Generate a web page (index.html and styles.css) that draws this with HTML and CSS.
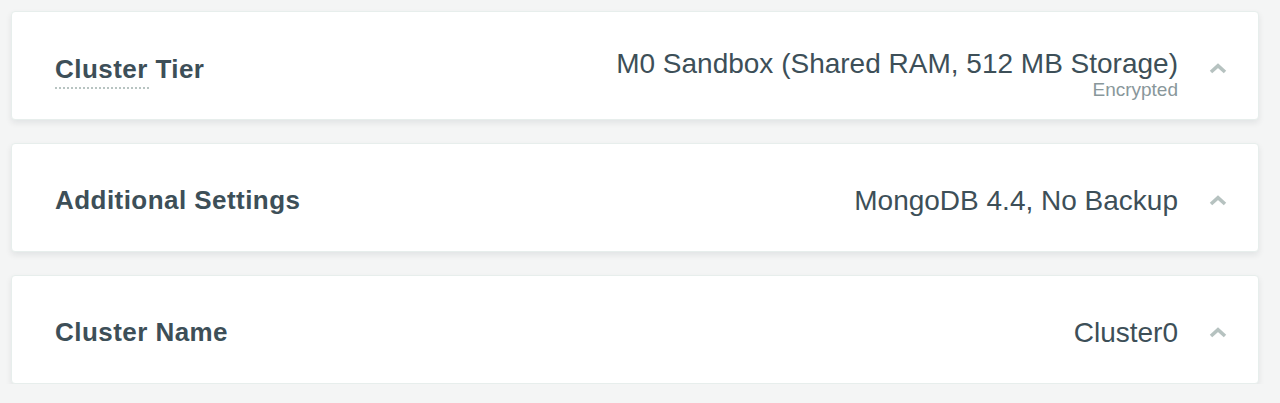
FILE: index.html
```html
<!DOCTYPE html>
<html>
<head>
<meta charset="utf-8">
<link rel="stylesheet" href="styles.css">
</head>
<body>
<div class="stack">
  <section class="card">
    <div class="title title-dotted">Cluster Tier</div>
    <div class="value value-stacked">
      <div class="value-main">M0 Sandbox (Shared RAM, 512 MB Storage)</div>
      <div class="value-sub">Encrypted</div>
    </div>
    <svg class="chev" width="18" height="11" viewBox="0 0 18 11"><path d="M2 9 L9 2.6 L16 9" fill="none" stroke="#b6c2c0" stroke-width="3.6" stroke-linejoin="miter"/></svg>
  </section>
  <section class="card">
    <div class="title">Additional Settings</div>
    <div class="value">
      <div class="value-main">MongoDB 4.4, No Backup</div>
    </div>
    <svg class="chev" width="18" height="11" viewBox="0 0 18 11"><path d="M2 9 L9 2.6 L16 9" fill="none" stroke="#b6c2c0" stroke-width="3.6" stroke-linejoin="miter"/></svg>
  </section>
  <section class="card">
    <div class="title">Cluster Name</div>
    <div class="value">
      <div class="value-main">Cluster0</div>
    </div>
    <svg class="chev" width="18" height="11" viewBox="0 0 18 11"><path d="M2 9 L9 2.6 L16 9" fill="none" stroke="#b6c2c0" stroke-width="3.6" stroke-linejoin="miter"/></svg>
  </section>
</div>
</body>
</html>
```
FILE: styles.css
```css
html, body {
  margin: 0;
  padding: 0;
  background: #f4f5f5;
  font-family: "Liberation Sans", Arial, sans-serif;
  color: #3d4f58;
}
.stack {
  display: flex;
  flex-direction: column;
  gap: 23px;
  padding: 11px 21px 0 11px;
}
.card {
  height: 107px;
  box-sizing: content-box;
  background: #fff;
  border: 1px solid #e7eeec;
  border-radius: 4px;
  box-shadow: 0 3px 6px rgba(6, 22, 33, 0.08);
  display: flex;
  align-items: center;
  padding: 0 31px 0 43px;
}
.card > * {
  margin-top: 5px;
}
.title {
  font-size: 26px;
  font-weight: 700;
  letter-spacing: 0.45px;
  flex: 1;
  line-height: 30px;
}
.card > .title-dotted {
  margin-top: 12px;
}
.title-dotted::after {
  content: "";
  display: block;
  width: 94px;
  height: 0;
  border-bottom: 2px dotted #b8c4c2;
  margin-top: 3px;
}
.value {
  text-align: right;
  margin-right: 31px;
}
.card > .value-stacked {
  margin-top: 15px;
}
.value-main {
  font-size: 28px;
  line-height: 33px;
}
.value-sub {
  font-size: 19px;
  color: #89979b;
  line-height: 20px;
}
.chev {
  display: block;
}
```
